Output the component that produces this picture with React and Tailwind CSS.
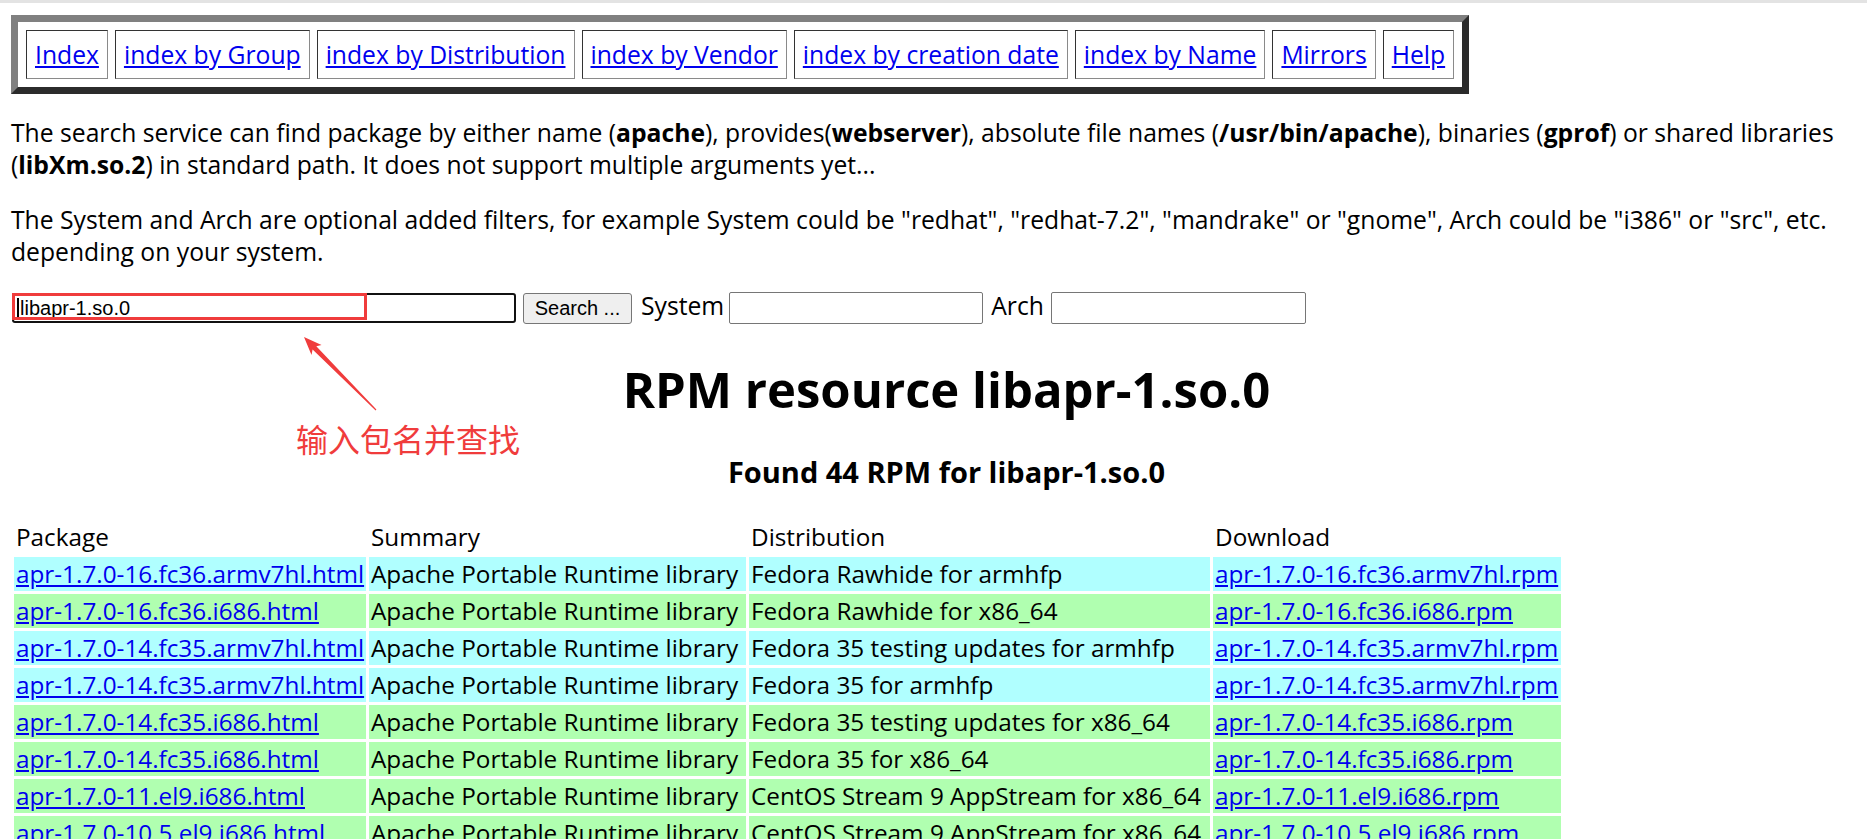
const nav = [
  "Index",
  "index by Group",
  "index by Distribution",
  "index by Vendor",
  "index by creation date",
  "index by Name",
  "Mirrors",
  "Help",
];

const CYAN = "bg-[#b0ffff]";
const GREEN = "bg-[#b0ffb0]";

const rows = [
  ["apr-1.7.0-16.fc36.armv7hl.html", "Fedora Rawhide for armhfp", "apr-1.7.0-16.fc36.armv7hl.rpm", CYAN],
  ["apr-1.7.0-16.fc36.i686.html", "Fedora Rawhide for x86_64", "apr-1.7.0-16.fc36.i686.rpm", GREEN],
  ["apr-1.7.0-14.fc35.armv7hl.html", "Fedora 35 testing updates for armhfp", "apr-1.7.0-14.fc35.armv7hl.rpm", CYAN],
  ["apr-1.7.0-14.fc35.armv7hl.html", "Fedora 35 for armhfp", "apr-1.7.0-14.fc35.armv7hl.rpm", CYAN],
  ["apr-1.7.0-14.fc35.i686.html", "Fedora 35 testing updates for x86_64", "apr-1.7.0-14.fc35.i686.rpm", GREEN],
  ["apr-1.7.0-14.fc35.i686.html", "Fedora 35 for x86_64", "apr-1.7.0-14.fc35.i686.rpm", GREEN],
  ["apr-1.7.0-11.el9.i686.html", "CentOS Stream 9 AppStream for x86_64", "apr-1.7.0-11.el9.i686.rpm", GREEN],
  ["apr-1.7.0-10.5.el9.i686.html", "CentOS Stream 9 AppStream for x86_64", "apr-1.7.0-10.5.el9.i686.rpm", GREEN],
  ["apr-1.7.0-10.el9.i686.html", "CentOS Stream 9 AppStream for x86_64", "apr-1.7.0-10.el9.i686.rpm", GREEN],
];

function Link({ children }) {
  return (
    <a href="#" className="text-[#0000ee] underline">
      {children}
    </a>
  );
}

export default function App() {
  return (
    <div className="relative min-h-screen bg-white border-t-[3px] border-[#e3e3e3] px-[11px] font-['Open_Sans','Noto_Sans',sans-serif] text-[24.7px] leading-[32px] text-black">
      {/* navigation table */}
      <div className="mt-[12px] flex w-fit gap-[7px] p-[8px] border-[7px] border-t-[#808080] border-l-[#808080] border-b-[#2b2b2b] border-r-[#2b2b2b]">
        {nav.map((n) => (
          <div
            key={n}
            className="border border-t-[#333333] border-l-[#333333] border-b-[#8a8a8a] border-r-[#8a8a8a] px-[8px] py-[7px] leading-[33px] whitespace-nowrap"
          >
            <Link>{n}</Link>
          </div>
        ))}
      </div>

      <p className="mt-[23px]">
        The search service can find package by either name (<b>apache</b>), provides(<b>webserver</b>), absolute file
        names (<b>/usr/bin/apache</b>), binaries (<b>gprof</b>) or shared libraries (<b>libXm.so.2</b>) in standard
        path. It does not support multiple arguments yet...
      </p>
      <p className="mt-[23px]">
        The System and Arch are optional added filters, for example System could be "redhat", "redhat-7.2", "mandrake"
        or "gnome", Arch could be "i386" or "src", etc. depending on your system.
      </p>

      {/* search form */}
      <div className="mt-[24px] flex h-[32px] items-center">
        <div className="relative ml-[1px] flex h-[30px] w-[504px] items-center rounded-[3px] border-2 border-[#111111] pl-[3px] font-['Liberation_Sans',Arial,sans-serif] text-[20px] leading-none">
          <span className="mr-[1px] inline-block h-[21px] w-[2px] bg-black" />
          <span>libapr-1.so.0</span>
          <div className="absolute -left-[2px] -top-[2px] h-[27px] w-[355px] border-[3px] border-[#f03c3c]" />
        </div>
        <button className="ml-[7px] h-[31px] w-[109px] rounded-[3px] border border-[#767676] bg-[#efefef] font-['Liberation_Sans',Arial,sans-serif] text-[20px] leading-none text-black">
          Search ...
        </button>
        <span className="ml-[9px] pb-[4px]">System</span>
        <div className="ml-[5px] h-[32px] w-[254px] rounded-[2px] border border-[#767676] bg-white" />
        <span className="ml-[8px] pb-[4px]">Arch</span>
        <div className="ml-[7px] h-[32px] w-[255px] rounded-[2px] border border-[#767676] bg-white" />
      </div>

      <h1 className="mt-[32px] pl-[26px] text-center text-[49px] font-bold leading-[66px]">
        RPM resource libapr-1.so.0
      </h1>
      <h3 className="mt-[30px] pl-[26px] text-center text-[29px] font-bold leading-[40px]">
        Found 44 RPM for libapr-1.so.0
      </h3>

      <table className="mt-[25px] w-[1553px] table-fixed border-separate border-spacing-[3px] whitespace-nowrap text-[24.3px]">
        <thead>
          <tr>
            <td className="w-[352px] px-[2px] py-[1px] text-left font-normal">Package</td>
            <td className="w-[377px] px-[2px] py-[1px] text-left font-normal">Summary</td>
            <td className="w-[461px] px-[2px] py-[1px] text-left font-normal">Distribution</td>
            <td className="w-[348px] px-[2px] py-[1px] text-left font-normal">Download</td>
          </tr>
        </thead>
        <tbody>
          {rows.map(([pkg, dist, rpm, bg], i) => (
            <tr key={i} className={bg}>
              <td className="px-[2px] py-[1px]">
                <Link>{pkg}</Link>
              </td>
              <td className="px-[2px] py-[1px]">Apache Portable Runtime library</td>
              <td className="px-[2px] py-[1px]">{dist}</td>
              <td className="px-[2px] py-[1px]">
                <Link>{rpm}</Link>
              </td>
            </tr>
          ))}
        </tbody>
      </table>

      {/* annotation overlay */}
      <svg
        className="absolute left-[290px] top-[327px]"
        width="100"
        height="90"
        viewBox="0 0 100 90"
      >
        <polygon
          points="14,7 31.5,15 26.3,16.2 86.4,79.6 85.6,80.4 22.6,19.5 21.5,25"
          fill="#f03c3c"
        />
      </svg>
      <div className="absolute left-[296px] top-[419px] font-['Noto_Sans_CJK_SC',sans-serif] text-[32px] leading-none text-[#f03c3c]">
        输入包名并查找
      </div>
    </div>
  );
}
